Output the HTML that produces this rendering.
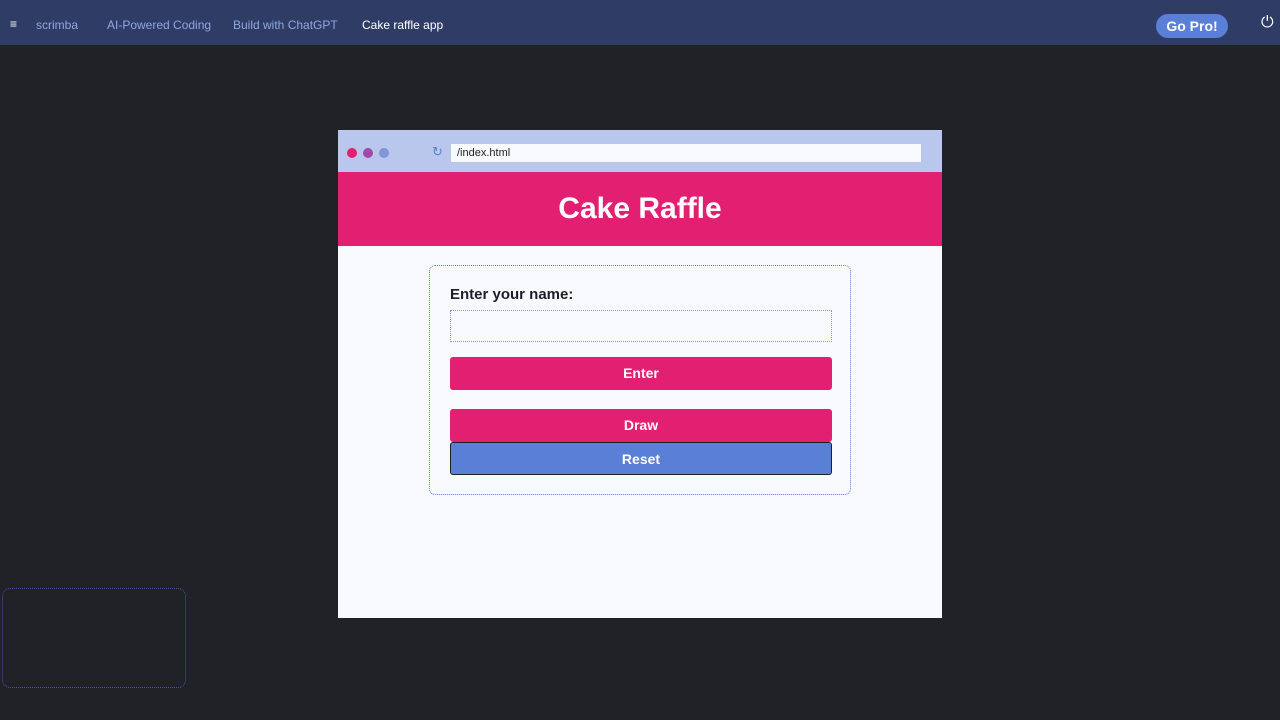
<!DOCTYPE html>
<html><head><meta charset="utf-8"><style>
*{margin:0;padding:0;box-sizing:border-box}
body{width:1280px;height:720px;background:#212228;font-family:"Liberation Sans",sans-serif;position:relative;overflow:hidden}
.top{position:absolute;left:0;top:0;width:1280px;height:45px;background:#2f3d66;color:#8fa6e0;font-size:12px}
.top span{position:absolute;top:18px}
.gp{position:absolute;left:1156px;top:14px;width:72px;height:24px;border-radius:12px;background:#5a7fd6;color:#fff;font-weight:bold;font-size:14px;text-align:center;line-height:24px}
.win{position:absolute;left:338px;top:130px;width:604px;height:488px;background:#f8f9fc}
.bar{height:42px;background:#b9c7ec;position:relative}
.url{position:absolute;left:451px;top:14px;width:470px;height:18px;background:#f8f9fc;font-size:11px;line-height:18px;padding-left:6px;color:#222}
.url{left:113px}
.dot{position:absolute;top:18px;width:10px;height:10px;border-radius:5px}
.hdr{height:74px;background:#e31f71;color:#fff;font-weight:bold;font-size:30px;text-align:center;line-height:74px}
.card{position:absolute;left:91px;top:135px;width:422px;height:230px;border:1px dotted #5a7fd6;border-radius:6px}
.lbl{position:absolute;left:20px;top:20px;font-weight:bold;font-size:15px;color:#1c1e2a}
.inp{position:absolute;left:20px;top:44px;width:382px;height:32px;border:1px dotted #7f97d8}
.btn{position:absolute;left:20px;width:382px;height:33px;border-radius:3px;color:#fff;font-weight:bold;font-size:14px;text-align:center;line-height:33px}
.mini{position:absolute;left:2px;top:588px;width:184px;height:100px;border:1px dotted #3d5aa0;border-radius:8px}
</style></head><body>
<div class="top">
<span style="left:10px;top:17px;color:#fff;font-weight:bold">≡</span>
<span style="left:36px">scrimba</span>
<span style="left:107px">AI-Powered Coding</span>
<span style="left:233px">Build with ChatGPT</span>
<span style="left:362px;color:#fff">Cake raffle app</span>
<div class="gp">Go Pro!</div>
<span style="left:1261px;top:14px;color:#fff;font-size:16px">⏻</span>
</div>
<div class="win">
<div class="bar">
<div class="dot" style="left:9px;background:#e31f71"></div>
<div class="dot" style="left:25px;background:#a04aa8"></div>
<div class="dot" style="left:41px;background:#7f97d8"></div>
<span style="position:absolute;left:94px;top:14px;color:#5a7fd6;font-size:13px">↻</span>
<div class="url">/index.html</div>
</div>
<div class="hdr">Cake Raffle</div>
<div class="card">
<div class="lbl">Enter your name:</div>
<div class="inp"></div>
<div class="btn" style="top:91px;background:#e31f71">Enter</div>
<div class="btn" style="top:143px;background:#e31f71">Draw</div>
<div class="btn" style="top:176px;background:#5a7fd6;border:1px solid #1c1e2a">Reset</div>
</div>
</div>
<div class="mini"></div>
</body></html>
